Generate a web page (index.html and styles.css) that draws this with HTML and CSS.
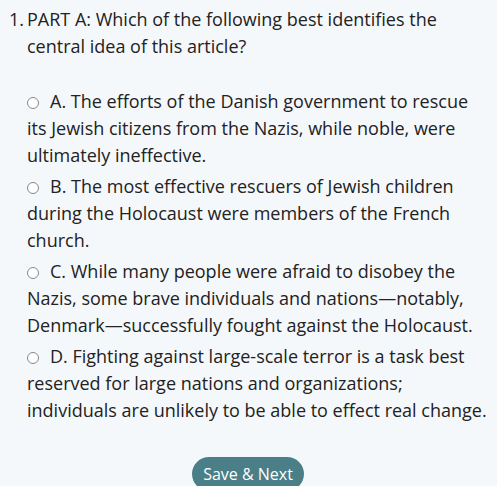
FILE: index.html
```html
<!DOCTYPE html>
<html>
<head>
<meta charset="utf-8">
<link rel="stylesheet" href="styles.css">
</head>
<body>
<div class="page">
  <div class="question">
    <span class="num">1.</span>
    <span class="qtext">PART A: Which of the following best identifies the central idea of this article?</span>
  </div>
  <div class="options">
    <div class="option"><span class="radio"></span>A. The efforts of the Danish government to rescue its Jewish citizens from the Nazis, while noble, were ultimately ineffective.</div>
    <div class="option"><span class="radio"></span>B. The most effective rescuers of Jewish children during the Holocaust were members of the French church.</div>
    <div class="option"><span class="radio"></span>C. While many people were afraid to disobey the Nazis, some brave individuals and nations—notably, Denmark—successfully fought against the Holocaust.</div>
    <div class="option"><span class="radio"></span>D. Fighting against large-scale terror is a task best reserved for large nations and organizations; individuals are unlikely to be able to effect real change.</div>
  </div>
  <div class="actions">
    <button class="save">Save &amp; Next</button>
  </div>
</div>
</body>
</html>
```
FILE: styles.css
```css
html, body {
  margin: 0;
  padding: 0;
  background: #f5f8fa;
}
body {
  font-family: "Open Sans", sans-serif;
  color: #222;
  font-size: 18px;
}
.page {
  padding: 6px 10px 0 9px;
}
.question {
  display: flex;
  line-height: 27px;
}
.num {
  width: 18px;
  flex: none;
}
.options {
  margin-top: 28px;
  padding-left: 18px;
}
.option {
  line-height: 27px;
  margin-bottom: 4px;
}
.radio {
  display: inline-block;
  width: 10px;
  height: 10px;
  border: 1px solid #888;
  border-radius: 50%;
  background: #fff;
  margin-right: 11px;
  vertical-align: -1px;
}
.actions {
  display: flex;
  justify-content: center;
  margin-top: 33px;
}
.save {
  font-family: "Open Sans", sans-serif;
  font-size: 16px;
  color: #fff;
  background: #4a7f87;
  border: none;
  border-radius: 17px;
  padding: 0 11px;
  height: 34px;
}
```
